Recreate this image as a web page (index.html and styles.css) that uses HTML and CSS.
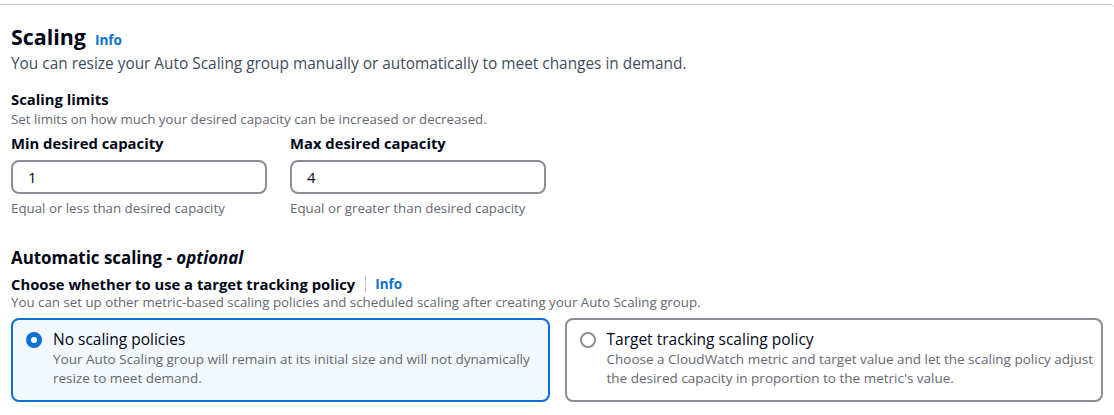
FILE: index.html
```html
<!DOCTYPE html>
<html>
<head>
<meta charset="utf-8">
<link rel="stylesheet" href="styles.css">
</head>
<body>
<div class="container">
  <div class="header">
    <h2 class="title">Scaling <a class="info info-h">Info</a></h2>
    <p class="desc">You can resize your Auto Scaling group manually or automatically to meet changes in demand.</p>
  </div>

  <div class="section">
    <div class="label">Scaling limits</div>
    <div class="small">Set limits on how much your desired capacity can be increased or decreased.</div>
    <div class="fields">
      <div class="field">
        <div class="label">Min desired capacity</div>
        <div class="input">1</div>
        <div class="small hint">Equal or less than desired capacity</div>
      </div>
      <div class="field">
        <div class="label">Max desired capacity</div>
        <div class="input">4</div>
        <div class="small hint">Equal or greater than desired capacity</div>
      </div>
    </div>
  </div>

  <div class="section auto">
    <div class="h3">Automatic scaling - <i>optional</i></div>
    <div class="label">Choose whether to use a target tracking policy<span class="sep"></span><a class="info">Info</a></div>
    <div class="small">You can set up other metric-based scaling policies and scheduled scaling after creating your Auto Scaling group.</div>
    <div class="tiles">
      <div class="tile selected">
        <span class="radio on"></span>
        <div class="tile-text">
          <div class="tile-title">No scaling policies</div>
          <div class="tile-desc">Your Auto Scaling group will remain at its initial size and will not dynamically resize to meet demand.</div>
        </div>
      </div>
      <div class="tile">
        <span class="radio"></span>
        <div class="tile-text">
          <div class="tile-title">Target tracking scaling policy</div>
          <div class="tile-desc">Choose a CloudWatch metric and target value and let the scaling policy adjust the desired capacity in proportion to the metric's value.</div>
        </div>
      </div>
    </div>
  </div>
</div>
</body>
</html>
```
FILE: styles.css
```css
* { box-sizing: border-box; }
html, body { margin: 0; padding: 0; background: #fff; }
body {
  font-family: "Open Sans", "Noto Sans", sans-serif;
  color: #000716;
  font-size: 14px;
}
.container {
  margin-top: 4px;
  border-top: 1px solid #c6c6cd;
  border-top-right-radius: 4px;
  padding: 18px 11px 0 11px;
}
.title {
  margin: 0;
  font-size: 21.4px;
  line-height: 28px;
  font-weight: 700;
  display: flex;
  align-items: baseline;
  gap: 9px;
}
.info {
  color: #0972d3;
  font-weight: 700;
  font-size: 13.5px;
  text-decoration: none;
}
.desc {
  margin: 0;
  font-size: 15.4px;
  line-height: 20px;
  color: #414d5c;
}
.section { margin-top: 15px; }
.label {
  font-weight: 700;
  font-size: 14.8px;
  line-height: 20px;
  display: flex;
  align-items: center;
}
.small {
  font-size: 13.3px;
  line-height: 16px;
  margin-top: 2px;
  color: #656871;
}
.fields {
  display: flex;
  gap: 23px;
  margin-top: 6px;
}
.field { width: 256px; }
.input {
  margin-top: 7px;
  height: 34px;
  border: 2px solid #8c8c94;
  border-radius: 8px;
  padding: 0 15px;
  display: flex;
  align-items: center;
  font-size: 15px;
}
.small.hint { margin-top: 6px; }
.section.auto { margin-top: 31px; }
.h3 {
  font-weight: 700;
  font-size: 16.9px;
  line-height: 22px;
}
.auto .label { margin-top: 5px; }
.auto .small { margin-top: 0; }
.sep {
  display: inline-block;
  width: 1px;
  height: 16px;
  background: #c6c6cd;
  margin: 0 9px 0 10px;
}
.tiles {
  display: flex;
  gap: 15px;
  margin-top: 8px;
}
.tile {
  flex: 1;
  height: 84px;
  border: 2px solid #8c8c94;
  border-radius: 8px;
  padding: 9px 6px 9px 13px;
  display: flex;
  gap: 11px;
}
.tile.selected {
  border-color: #0972d3;
  background: #f2f8fd;
}
.radio {
  flex: none;
  width: 16px;
  height: 16px;
  border-radius: 50%;
  border: 2px solid #8c8c94;
  margin-top: 3px;
}
.radio.on {
  border: 5px solid #0972d3;
  background: #fff;
}
.tile-title {
  font-size: 15.5px;
  line-height: 20px;
}
.tile-desc {
  margin-top: 1px;
  font-size: 13.5px;
  line-height: 19px;
  color: #656871;
}
```
